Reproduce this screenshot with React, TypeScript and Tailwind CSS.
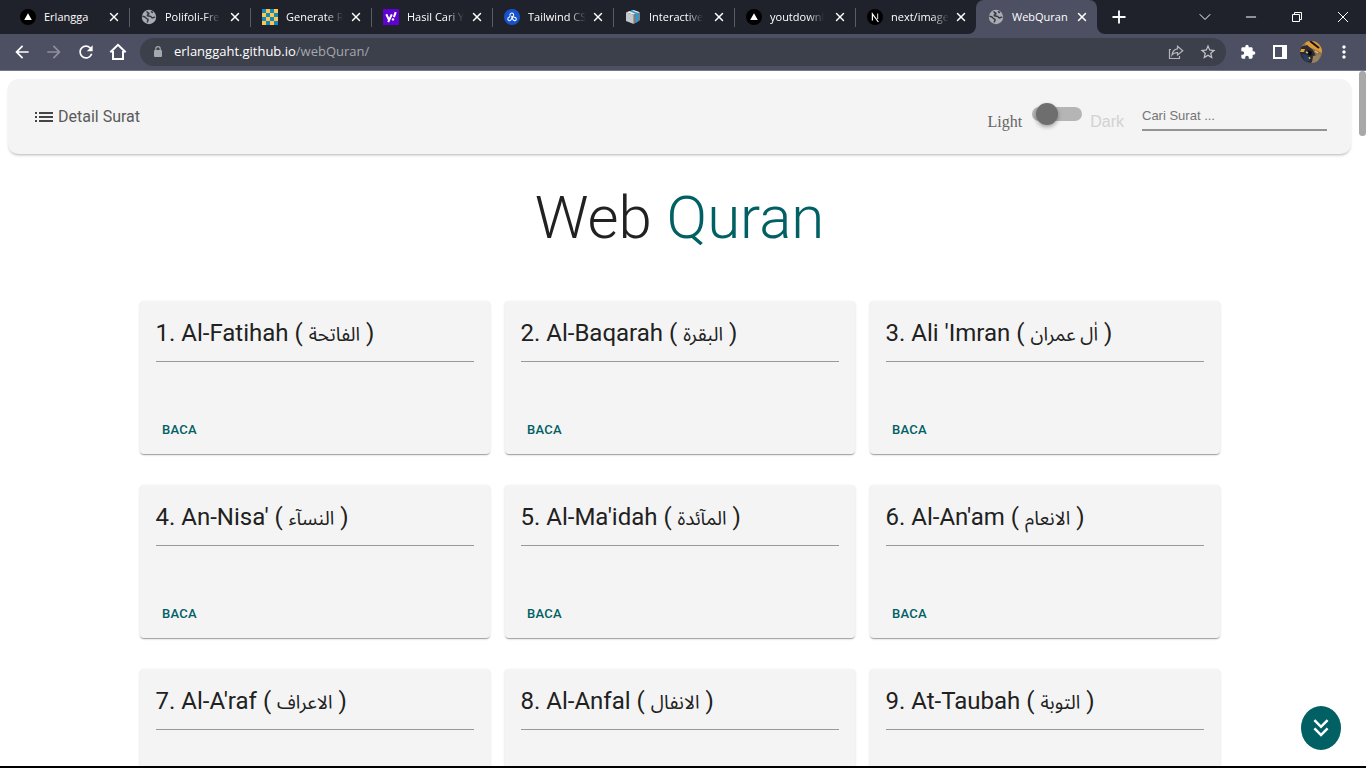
import React from 'react';
import {
  MdArrowBack,
  MdArrowForward,
  MdRefresh,
  MdStarOutline,
  MdExtension,
  MdMoreVert,
  MdList,
  MdKeyboardDoubleArrowDown,
} from 'react-icons/md';
import { ChevronDown, Minus, Plus, X } from 'lucide-react';

type IconName = 'triangle' | 'globe' | 'checker' | 'yahoo' | 'components' | 'box' | 'next';

const tabs: { title: string; icon: IconName; active?: boolean; faded?: boolean }[] = [
  { title: 'Erlangga', icon: 'triangle' },
  { title: 'Polifoli-Fre', icon: 'globe', faded: true },
  { title: 'Generate R', icon: 'checker', faded: true },
  { title: 'Hasil Cari Y', icon: 'yahoo', faded: true },
  { title: 'Tailwind CS', icon: 'components', faded: true },
  { title: 'Interactive', icon: 'box', faded: true },
  { title: 'youtdownl', icon: 'triangle', faded: true },
  { title: 'next/image', icon: 'next', faded: true },
  { title: 'WebQuran', icon: 'globe', active: true },
];

const surahs = [
  { name: 'Al-Fatihah', arabic: 'الفاتحة' },
  { name: 'Al-Baqarah', arabic: 'البقرة' },
  { name: "Ali 'Imran", arabic: 'اٰل عمران' },
  { name: "An-Nisa'", arabic: 'النسآء' },
  { name: "Al-Ma'idah", arabic: 'المآئدة' },
  { name: "Al-An'am", arabic: 'الانعام' },
  { name: "Al-A'raf", arabic: 'الاعراف' },
  { name: 'Al-Anfal', arabic: 'الانفال' },
  { name: 'At-Taubah', arabic: 'التوبة' },
];

function Favicon({ name }: { name: IconName }) {
  switch (name) {
    case 'triangle':
      return (
        <svg viewBox="0 0 16 16" className="size-4 shrink-0">
          <circle cx="8" cy="8" r="8" fill="#000" />
          <path d="M8 4.2 11.8 11H4.2Z" fill="#fff" />
        </svg>
      );
    case 'globe':
      return (
        <svg viewBox="0 0 16 16" className="size-4 shrink-0">
          <circle cx="8" cy="8" r="7.2" fill="#a9acb2" />
          <path
            d="M6.2 2.3c-.3 1 .2 1.500 1.200 1.700 1 .3.4 1.300-.5 1.600-1 .3-.7 1.300.1 1.400 1.200.1 2.800-.2 3.300 1.100.3.9 1.200 1 1.800.5.800-.6 1.700-.5 2 0M1.400 7.300c1.500.3 3 .6 3.600 1.700.5 1 1.900.7 2.100 1.700.200 1-.8 1.300-.8 2.700M10.500 2.200c-.1.900.6 1.200 1.500 1.300"
            fill="none"
            stroke="#33363f"
            strokeWidth="1.500"
          />
        </svg>
      );
    case 'checker':
      return (
        <svg viewBox="0 0 16 16" className="size-4 shrink-0" shapeRendering="crispEdges">
          <rect width="16" height="16" fill="#1387c0" />
          <path
            d="M4 0h4v4H4zM12 0h4v4h-4zM0 4h4v4H0zM8 4h4v4H8zM4 8h4v4H4zM12 8h4v4h-4zM0 12h4v4H0zM8 12h4v4H8z"
            fill="#ffc64a"
          />
        </svg>
      );
    case 'yahoo':
      return (
        <svg viewBox="0 0 16 16" className="size-4 shrink-0">
          <rect width="16" height="16" fill="#6001d2" />
          <path d="m3.300 5.300 2.500 5.200M8.800 5.300 5.200 13.200" stroke="#fff" strokeWidth="2" />
          <path d="M12.700 3.200 10.900 8.200" stroke="#fff" strokeWidth="2" />
          <circle cx="10" cy="10.400" r="1.200" fill="#fff" />
        </svg>
      );
    case 'components':
      return (
        <svg viewBox="0 0 16 16" className="size-4 shrink-0">
          <circle cx="8" cy="8" r="8" fill="#1552cf" />
          <g fill="none" stroke="#fff" strokeWidth="1.100">
            <path d="M6.300 6.800a1.800 1.800 0 1 1 3.200-.3L7 10.800a1.700 1.700 0 1 1-2.300-2.300l1.600-1.100" />
            <path d="m7.200 7.300 4 1.300a1.600 1.600 0 1 1-1.700 2.600L7.500 8.600" />
          </g>
        </svg>
      );
    case 'box':
      return (
        <svg viewBox="0 0 16 16" className="size-4 shrink-0">
          <path d="M1 3.300 8.500 1 15 3.300 8.800 5.800Z" fill="#eef0f1" />
          <path d="M1 3.300 8.800 5.800V15L1 12Z" fill="#c5c8ca" />
          <path d="M8.800 5.800 15 3.300v8L8.800 15Z" fill="#777d81" />
          <path d="M4.600 2.200 7 1.500 13.200 4v8.400l-2.300 1.300V5Z" fill="#279bd5" />
        </svg>
      );
    case 'next':
      return (
        <svg viewBox="0 0 16 16" className="size-4 shrink-0">
          <circle cx="8" cy="8" r="8" fill="#000" />
          <path d="M5.400 11.500V4.800L11.400 13" fill="none" stroke="#fff" strokeWidth="1.200" />
          <path d="M10.600 4.600v5.300" stroke="#bbb" strokeWidth="1.200" />
        </svg>
      );
  }
}

function Tab({
  title,
  icon,
  active,
  faded,
  divider,
}: {
  title: string;
  icon: IconName;
  active?: boolean;
  faded?: boolean;
  divider: boolean;
}) {
  return (
    <div
      className={
        active
          ? 'relative flex h-full w-[121px] items-center rounded-t-lg bg-[#4d4f63] pr-2 pl-3'
          : 'relative flex h-full w-[121px] items-center pr-2 pl-3'
      }
    >
      <Favicon name={icon} />
      <span
        className={
          faded
            ? 'ml-2 mask-r-from-70% mask-r-to-100% text-[11px] whitespace-nowrap'
            : 'ml-2 text-[11px] whitespace-nowrap'
        }
      >
        {title}
      </span>
      <button type="button" aria-label={`Close ${title}`} className="ml-auto shrink-0">
        <X className="size-[14px]" strokeWidth={2.5} />
      </button>
      {divider && <span className="absolute top-2 -right-px h-[19px] w-px bg-[#5b5d66]" />}
      {active && (
        <>
          <span className="absolute bottom-0 -left-2 size-2 bg-[#4d4f63]">
            <span className="block size-2 rounded-br-lg bg-[#20222b]" />
          </span>
          <span className="absolute -right-2 bottom-0 size-2 bg-[#4d4f63]">
            <span className="block size-2 rounded-bl-lg bg-[#20222b]" />
          </span>
        </>
      )}
    </div>
  );
}

function Avatar() {
  return (
    <svg viewBox="0 0 22 22" className="size-[22px] rounded-full">
      <rect width="22" height="22" fill="#8d7350" />
      <path d="M6 0h16v12L14 8 5 5Z" fill="#d99b3e" />
      <path d="M0 6 7 4l6 5 3 6-5 7H0Z" fill="#2b2a30" />
      <path d="m10 0 9 7" stroke="#17130f" strokeWidth="2" />
      <path d="M1 8h4l-1 3H0Z" fill="#e0a33c" />
      <path d="m2 13 5 1 3 6-5 1Z" fill="#263e61" />
      <path d="m8 9 4 2-1 4-4-2Z" fill="#080a10" />
      <path d="m13 15 8-2-4 9h-5Z" fill="#99825f" />
      <path d="m9 16 1 2M15 10l3 2M6 11l2 1" stroke="#d8ba7b" strokeWidth="1.500" />
    </svg>
  );
}

function BrowserChrome() {
  return (
    <header className="shrink-0 bg-[#20222b] font-['Open_Sans',sans-serif] text-white">
      <div className="flex h-[34px] items-center justify-between">
        <div className="flex h-full items-center pl-2">
          {tabs.map((tab, i) => (
            <Tab key={tab.title} {...tab} divider={i < 7} />
          ))}
          <button type="button" aria-label="New tab" className="ml-3">
            <Plus className="size-5" strokeWidth={2.2} />
          </button>
        </div>
        <div className="flex h-7 items-center">
          <button type="button" aria-label="Search tabs" className="flex w-[46px] justify-center">
            <ChevronDown className="size-5" strokeWidth={1.2} />
          </button>
          <button type="button" aria-label="Minimize" className="flex w-[46px] justify-center">
            <Minus className="size-4" strokeWidth={1.5} />
          </button>
          <button type="button" aria-label="Restore" className="flex w-[46px] justify-center">
            <svg viewBox="0 0 10 10" className="size-[10px]" fill="none" stroke="currentColor">
              <path d="M.5 2.500h7v7h-7zM2.500 2.500v-2h7v7h-2" />
            </svg>
          </button>
          <button type="button" aria-label="Close" className="flex w-[46px] justify-center">
            <svg viewBox="0 0 10 10" className="size-[10px]" stroke="currentColor">
              <path d="m0 0 10 10M10 0 0 10" />
            </svg>
          </button>
        </div>
      </div>
      <div className="flex h-9 items-center bg-[#4d4f63] pr-3">
        <nav className="flex items-center gap-3 pl-3">
          <button type="button" aria-label="Back">
            <MdArrowBack className="size-5" />
          </button>
          <button type="button" aria-label="Forward" className="text-[#8e909d]">
            <MdArrowForward className="size-5" />
          </button>
          <button type="button" aria-label="Reload">
            <MdRefresh className="size-5" />
          </button>
          <button type="button" aria-label="Home">
            <svg viewBox="0 0 20 20" className="size-5" fill="none" stroke="currentColor" strokeWidth="2">
              <path d="M5 9v8h10V9M2.300 10.300 10 2.800l7.700 7.500" />
            </svg>
          </button>
        </nav>
        <div className="ml-3 flex h-7 flex-1 items-center rounded-full bg-[#3c404b] pr-[9px] pl-3">
          <svg viewBox="0 0 12 14" className="h-[14px] w-3 text-[#a5a8ad]">
            <rect x="2" y="5" width="8" height="7" rx="1" fill="currentColor" />
            <path d="M3.800 5.500V3.800a2.200 2.200 0 0 1 4.400 0v1.700" fill="none" stroke="currentColor" strokeWidth="1.200" />
          </svg>
          <span className="ml-[10px] flex-1 text-[13px] text-[#a6a8ae]">
            <span className="text-white">erlanggaht.github.io</span>/webQuran/
          </span>
          <button type="button" aria-label="Share" className="mr-[15px] text-[#b4b6bb]">
            <svg viewBox="0 0 16 16" className="size-4" fill="none" stroke="currentColor" strokeWidth="1.200">
              <path d="M3 5.500H1.500v9h10V12" />
              <path d="M9.500 2.200 14.800 6.700 9.500 11V8.700C7 8.500 5.300 9.300 4 11c.4-3.200 2.300-5.700 5.500-6.200Z" />
            </svg>
          </button>
          <button type="button" aria-label="Bookmark" className="text-[#c3c5c9]">
            <MdStarOutline className="size-[18px]" />
          </button>
        </div>
        <div className="ml-[14px] flex items-center">
          <button type="button" aria-label="Extensions" className="flex w-4 justify-center">
            <MdExtension className="size-4" />
          </button>
          <button type="button" aria-label="Side panel" className="ml-4 flex w-4 justify-center">
            <svg viewBox="0 0 14 14" className="size-[14px]">
              <path d="M0 0h14v14H0ZM2 2v10h7V2Z" fill="currentColor" fillRule="evenodd" />
            </svg>
          </button>
          <button type="button" aria-label="Profile" className="ml-3">
            <Avatar />
          </button>
          <button type="button" aria-label="Menu" className="ml-3">
            <MdMoreVert className="size-5" />
          </button>
        </div>
      </div>
      <div className="h-px bg-[#76788a]" />
    </header>
  );
}

function SurahCard({ index, name, arabic }: { index: number; name: string; arabic: string }) {
  return (
    <article className="flex flex-col rounded bg-[#f4f4f4] shadow-[0_2px_1px_-1px_rgba(0,0,0,0.2),0_1px_1px_0_rgba(0,0,0,0.14),0_1px_3px_0_rgba(0,0,0,0.12)]">
      <div className="px-4 pt-4 pb-11">
        <h2 className="h-8 text-2xl leading-8 whitespace-nowrap text-[#212121]">
          {index}. {name} ({' '}
          <span lang="ar" className="text-[19px] leading-none">
            {arabic}
          </span>{' '}
          )
        </h2>
        <hr className="mt-3 border-[#999]" />
      </div>
      <div className="p-2">
        <button type="button" className="h-8 w-16 rounded text-[13px] font-medium tracking-wide text-[#006064] uppercase">
          Baca
        </button>
      </div>
    </article>
  );
}

export default function App() {
  return (
    <div className="flex h-screen flex-col overflow-hidden border-b-2 border-black bg-white">
      <BrowserChrome />
      <div className="flex min-h-0 flex-1">
        <main className="relative min-w-0 flex-1 overflow-hidden font-[Roboto,'Noto_Sans_Arabic','DejaVu_Sans',sans-serif]">
          <div className="m-2 flex h-[75px] items-center justify-between rounded-[10px] bg-[#f4f4f4] px-6 shadow-[0_2px_3px_-1px_rgba(0,0,0,0.3)]">
            <a href="#detail" className="flex items-center gap-[2px] text-base text-[#5a5a5a]">
              <MdList className="size-6 text-[#444]" />
              Detail Surat
            </a>
            <div className="flex items-center">
              <label htmlFor="theme" className="pt-[10px] font-['Liberation_Serif',serif] text-base text-[#666]">
                Light
              </label>
              <span className="relative mr-2 mb-[6px] ml-[10px] flex h-[22px] w-[50px] items-center">
                <input
                  id="theme"
                  type="checkbox"
                  role="switch"
                  className="h-[14px] w-full appearance-none rounded-full bg-[#b5b5b5]"
                />
                <span className="pointer-events-none absolute left-1 size-[22px] rounded-full bg-[#6e6e6e] shadow-[0_2px_4px_rgba(0,0,0,0.35)]" />
              </span>
              <label htmlFor="theme" className="pt-[10px] font-['Liberation_Sans',sans-serif] text-base text-[#d2d2d2]">
                Dark
              </label>
              <input
                type="text"
                aria-label="Cari Surat"
                placeholder="Cari Surat ..."
                className="ml-[18px] h-7 w-[185px] border-b-2 border-[#949494] bg-transparent font-['Liberation_Sans',sans-serif] text-[13px] outline-none placeholder:text-[#757575]"
              />
            </div>
          </div>
          <h1 className="mt-7 text-center text-6xl leading-[72px] font-light text-[#212121]">
            Web <span className="text-[#006064]">Quran</span>
          </h1>
          <section className="mx-auto mt-[47px] grid max-w-[1080px] grid-cols-3 gap-x-[15px] gap-y-[31px]">
            {surahs.map((s, i) => (
              <SurahCard key={s.name} index={i + 1} name={s.name} arabic={s.arabic} />
            ))}
          </section>
          <button
            type="button"
            aria-label="Scroll down"
            className="absolute right-[18px] bottom-4 flex h-11 w-10 items-center justify-center rounded-[50%] bg-[#006064] text-white"
          >
            <MdKeyboardDoubleArrowDown className="size-[30px]" />
          </button>
        </main>
        <div className="w-[7px] shrink-0 bg-white">
          <div className="h-[65px] rounded-full bg-[#a8a8a8]" />
        </div>
      </div>
    </div>
  );
}
